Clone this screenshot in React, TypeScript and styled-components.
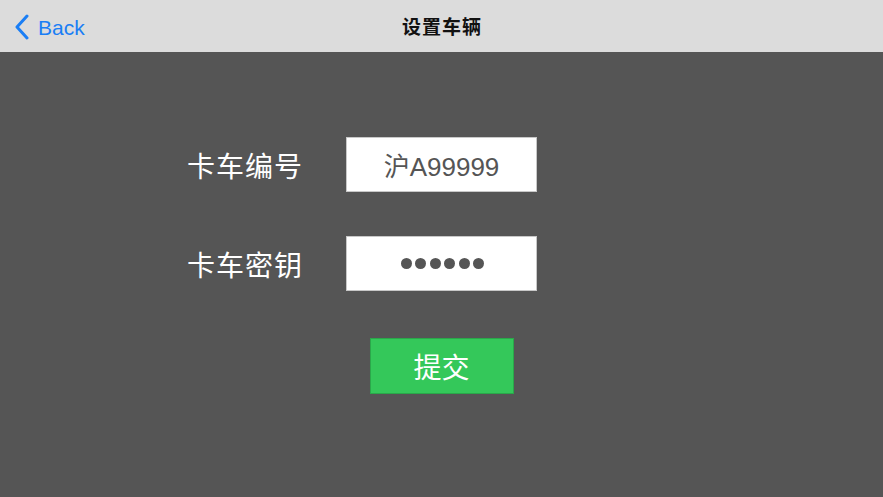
import styled, { createGlobalStyle } from 'styled-components';

/* -------- Global -------- */
const GlobalStyle = createGlobalStyle`
  html, body {
    margin: 0;
    padding: 0;
    height: 100%;
    background-color: #555555;
  }
  #root {
    height: 100%;
  }
  * {
    box-sizing: border-box;
  }
`;

/* -------- Styled Components -------- */
const Screen = styled.div`
  display: flex;
  flex-direction: column;
  height: 100vh;
  background-color: #555555;
  font-family: "Liberation Sans", "Noto Sans CJK SC", sans-serif;
`;

const NavBar = styled.header`
  display: grid;
  grid-template-columns: 1fr auto 1fr;
  align-items: center;
  height: 52px;
  padding: 0 12px 0 13px;
  background-color: #dcdcdc;
`;

const BackButton = styled.a`
  display: flex;
  align-items: center;
  gap: 7px;
  padding-top: 3px;
  color: #1a7ef5;
  font-family: "Liberation Sans", "Noto Sans CJK SC", sans-serif;
  font-size: 21px;
  text-decoration: none;
  cursor: pointer;
  & svg {
    width: 18px;
    height: 26px;
    margin-top: -2px;
  }
`;

const Title = styled.h1`
  margin: 0 0 1px;
  color: #111111;
  font-family: "Noto Sans CJK SC", sans-serif;
  font-size: 19px;
  font-weight: 700;
  letter-spacing: 1px;
`;

const Form = styled.form`
  display: flex;
  flex-direction: column;
  padding-top: 85px;
`;

const Row = styled.div<{ spacing?: number }>`
  display: grid;
  grid-template-columns: 1fr 191px 1fr;
  align-items: center;
  margin-bottom: ${props => props.spacing ?? 44}px;
`;

const Label = styled.label`
  justify-self: end;
  margin-right: 43px;
  color: #ffffff;
  font-family: "Noto Sans CJK SC", sans-serif;
  font-size: 28px;
  font-weight: 400;
  letter-spacing: 1px;
`;

const Field = styled.div`
  display: flex;
  align-items: center;
  justify-content: center;
  height: 55px;
  background-color: #ffffff;
  border: 1px solid #c8c8c8;
  color: #555555;
  font-family: "Liberation Sans", "Noto Sans CJK SC", sans-serif;
  font-size: 26px;
`;

const Dots = styled.div`
  display: flex;
  gap: 3.5px;
  padding-left: 2px;
`;

const Dot = styled.span`
  width: 11px;
  height: 11px;
  border-radius: 50%;
  background-color: #555555;
`;

const Submit = styled.button`
  grid-column: 2;
  justify-self: center;
  width: 144px;
  height: 56px;
  padding: 0;
  background-color: #34c85a;
  border: 1px solid #2aa84a;
  color: #ffffff;
  font-family: "Noto Sans CJK SC", sans-serif;
  font-size: 28px;
  cursor: pointer;
`;

function ChevronLeft() {
  return (
    <svg viewBox="0 0 18 26" fill="none">
      <path d="M14 2 L4 13 L14 24" stroke="#1a7ef5" strokeWidth="3" strokeLinecap="round" strokeLinejoin="round" />
    </svg>
  );
}

function App() {
  return (
    <>
      <GlobalStyle />
      <Screen>
        <NavBar>
          <BackButton>
            <ChevronLeft />
            Back
          </BackButton>
          <Title>设置车辆</Title>
          <div />
        </NavBar>
        <Form onSubmit={e => e.preventDefault()}>
          <Row>
            <Label>卡车编号</Label>
            <Field>沪A99999</Field>
          </Row>
          <Row spacing={47}>
            <Label>卡车密钥</Label>
            <Field>
              <Dots>
                {[0, 1, 2, 3, 4, 5].map(i => <Dot key={i} />)}
              </Dots>
            </Field>
          </Row>
          <Row spacing={0}>
            <Submit type="submit">提交</Submit>
          </Row>
        </Form>
      </Screen>
    </>
  );
}

export default App;
